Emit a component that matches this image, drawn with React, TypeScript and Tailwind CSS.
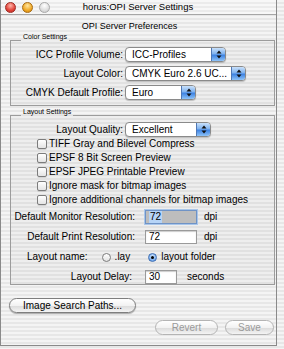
import type { ReactNode } from "react";

function Popup({ label, width }: { label: string; width: string }) {
  return (
    <div
      className={`flex h-[15px] ${width} overflow-hidden rounded-[4px] border border-[#8a8a8a] bg-white shadow-[0_1px_1px_rgba(0,0,0,0.2)]`}
    >
      <span className="flex-1 truncate pl-[6px] text-[10px] leading-[13px]">{label}</span>
      <span className="flex w-[14px] items-center justify-center border-l border-[#4f78b5] bg-[linear-gradient(180deg,#c9e1fb_0%,#7fb2ef_45%,#3d82e2_55%,#8ec3f8_100%)]">
        <svg width="6" height="9" viewBox="0 0 6 9">
          <path d="M3 0.5 L5.5 3.5 L0.5 3.5 Z" fill="#111" />
          <path d="M3 8.5 L5.5 5.5 L0.5 5.5 Z" fill="#111" />
        </svg>
      </span>
    </div>
  );
}

function Checkbox({ label }: { label: string }) {
  return (
    <div className="flex h-[14px] items-center pl-[26px]">
      <span className="h-[10px] w-[10px] rounded-[2px] border border-[#7c7c7c] bg-[linear-gradient(180deg,#ffffff,#e4e4e4)] shadow-[0_1px_0_rgba(0,0,0,0.1)]" />
      <span className="ml-[2px] text-[10px] leading-[12px]">{label}</span>
    </div>
  );
}

function Group({ title, children }: { title: string; children: ReactNode }) {
  return (
    <fieldset className="ml-[9px] w-[265px] border border-[#9c9c9c] bg-black/[0.025]">
      <legend className="ml-[10px] px-[2px] pb-[7px] text-[7px] leading-[7px]">{title}</legend>
      {children}
    </fieldset>
  );
}

function Button({ label, width, disabled }: { label: string; width: string; disabled?: boolean }) {
  return (
    <div
      className={`flex h-[15px] ${width} items-center justify-center rounded-full border border-[#7e7e7e] bg-[linear-gradient(180deg,#ffffff_0%,#f2f2f2_50%,#dcdcdc_55%,#f4f4f4_100%)] text-[10px] leading-[12px] shadow-[0_1px_1px_rgba(0,0,0,0.3)] ${disabled ? "border-[#b4b4b4] text-[#9a9a9a] shadow-none" : "text-black"}`}
    >
      {label}
    </div>
  );
}

function Field({ value, width, focused }: { value: string; width: string; focused?: boolean }) {
  return (
    <div
      className={`flex h-[14px] ${width} items-center border pl-[3px] text-[10px] leading-[12px] ${focused ? "border-[#6f93c6] bg-[#bdbdbd] shadow-[0_0_0_1px_#a9c6ea]" : "border-[#9a9a9a] bg-white shadow-[inset_0_1px_1px_rgba(0,0,0,0.2)]"}`}
    >
      <span className={focused ? "bg-[#b6d4f7] px-[1px]" : ""}>{value}</span>
    </div>
  );
}

function Radio({ label, on }: { label: string; on?: boolean }) {
  return (
    <div className="flex items-center">
      <span
        className={`flex h-[9px] w-[9px] items-center justify-center rounded-full border ${on ? "border-[#3f6fb3] bg-[radial-gradient(circle_at_50%_35%,#d4e8fd,#4d8fe6)]" : "border-[#7c7c7c] bg-[linear-gradient(180deg,#ffffff,#e2e2e2)]"}`}
      >
        {on && <span className="h-[3px] w-[3px] rounded-full bg-black" />}
      </span>
      <span className="ml-[4px] text-[10px] leading-[12px]">{label}</span>
    </div>
  );
}

export default function App() {
  return (
    <div className="h-[349px] w-[284px] overflow-hidden bg-[image:repeating-linear-gradient(180deg,#f4f4f4_0px,#f4f4f4_2px,#e7e7e7_2px,#e7e7e7_4px)] font-['Liberation_Sans',Arial,sans-serif] text-black">
      <div className="h-[346px] w-[277px] border-r border-b border-l border-[#8a8a8a]">
        <div className="relative flex h-[15px] items-center border-b border-[#a6a6a6] bg-[image:repeating-linear-gradient(180deg,#f7f7f7_0px,#f7f7f7_2px,#ebebeb_2px,#ebebeb_4px)]">
          <div className="flex gap-[6px] pl-[4px]">
            <span className="h-[11px] w-[11px] rounded-full border border-[#9c2a23] bg-[radial-gradient(circle_at_50%_30%,#ffb3a8,#e2443a_60%,#b8281f)]" />
            <span className="h-[11px] w-[11px] rounded-full border border-[#a86a10] bg-[radial-gradient(circle_at_50%_30%,#ffe6a0,#f0a926_60%,#c77f0d)]" />
            <span className="h-[11px] w-[11px] rounded-full border border-[#a9a9a9] bg-[radial-gradient(circle_at_50%_30%,#ffffff,#dedede_60%,#c4c4c4)]" />
          </div>
          <span className="flex-1 pr-[50px] text-center text-[9.5px] leading-[12px]">horus:OPI Server Settings</span>
        </div>

        <div className="pt-[5px] pr-[18px] text-center text-[9px] leading-[12px]">OPI Server Preferences</div>

        <div className="mt-[1px]">
          <Group title="Color Settings">
            <div className="flex flex-col gap-[4px] pb-[5px]">
              <div className="flex items-center">
                <span className="w-[112px] text-right text-[10px] leading-[12px]">ICC Profile Volume:</span>
                <div className="ml-[2px]">
                  <Popup label="ICC-Profiles" width="w-[101px]" />
                </div>
              </div>
              <div className="flex items-center">
                <span className="w-[112px] text-right text-[10px] leading-[12px]">Layout Color:</span>
                <div className="ml-[2px]">
                  <Popup label="CMYK Euro 2.6 UC..." width="w-[121px]" />
                </div>
              </div>
              <div className="flex items-center">
                <span className="w-[112px] text-right text-[10px] leading-[12px]">CMYK Default Profile:</span>
                <div className="ml-[2px]">
                  <Popup label="Euro" width="w-[71px]" />
                </div>
              </div>
            </div>
          </Group>
        </div>

        <div className="mt-[2px]">
          <Group title="Layout Settings">
            <div className="flex items-center">
              <span className="w-[112px] text-right text-[10px] leading-[12px]">Layout Quality:</span>
              <div className="ml-[2px]">
                <Popup label="Excellent" width="w-[86px]" />
              </div>
            </div>
            <Checkbox label="TIFF Gray and Bilevel Compress" />
            <Checkbox label="EPSF 8 Bit Screen Preview" />
            <Checkbox label="EPSF JPEG Printable Preview" />
            <Checkbox label="Ignore mask for bitmap images" />
            <Checkbox label="Ignore additional channels for bitmap images" />

            <div className="mt-[3px] flex items-center">
              <span className="w-[124px] text-right text-[10px] leading-[12px]">Default Monitor Resolution:</span>
              <div className="ml-[10px]">
                <Field value="72" width="w-[52px]" focused />
              </div>
              <span className="ml-[7px] text-[10px] leading-[12px]">dpi</span>
            </div>
            <div className="mt-[6px] flex items-center">
              <span className="w-[124px] text-right text-[10px] leading-[12px]">Default Print Resolution:</span>
              <div className="ml-[10px]">
                <Field value="72" width="w-[52px]" />
              </div>
              <span className="ml-[7px] text-[10px] leading-[12px]">dpi</span>
            </div>
            <div className="mt-[6px] flex h-[14px] items-center pl-[16px]">
              <span className="text-[10px] leading-[12px]">Layout name:</span>
              <div className="ml-[14px]">
                <Radio label=".lay" />
              </div>
              <div className="ml-[18px]">
                <Radio label="layout folder" on />
              </div>
            </div>
            <div className="mt-[6px] flex items-center">
              <span className="w-[121px] text-right text-[10px] leading-[12px]">Layout Delay:</span>
              <div className="ml-[13px]">
                <Field value="30" width="w-[32px]" />
              </div>
              <span className="ml-[10px] text-[10px] leading-[12px]">seconds</span>
            </div>
          </Group>
        </div>

        <div className="mt-[13px] pl-[8px]">
          <Button label="Image Search Paths..." width="w-[127px]" />
        </div>
        <div className="mt-[7px] flex justify-end gap-[7px] pr-[2px]">
          <Button label="Revert" width="w-[63px]" disabled />
          <Button label="Save" width="w-[49px]" disabled />
        </div>
      </div>
    </div>
  );
}
